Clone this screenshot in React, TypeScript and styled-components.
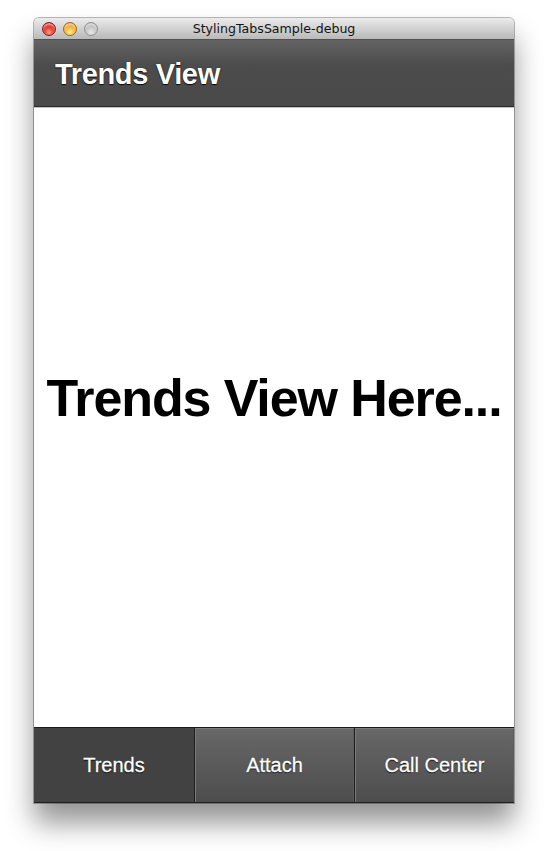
import React from "react";
import styled, { createGlobalStyle } from "styled-components";

const Global = createGlobalStyle`
  html, body { margin: 0; padding: 0; background: #ffffff; }
  #root { min-height: 851px; }
`;

const Page = styled.div`
  width: 547px;
  height: 851px;
  padding: 18px 0 0 34px;
  box-sizing: border-box;
  background: #ffffff;
`;

const Window = styled.div`
  width: 480px;
  height: 785px;
  display: flex;
  flex-direction: column;
  border-radius: 5px 5px 0 0;
  box-shadow: 0 20px 28px rgba(0, 0, 0, 0.42), 0 0 0 1px rgba(0, 0, 0, 0.28);
  background: #ffffff;
  overflow: hidden;
`;

const TitleBar = styled.div`
  position: relative;
  height: 21px;
  flex: none;
  display: flex;
  align-items: center;
  justify-content: center;
  background: linear-gradient(#ececec, #d2d2d2 50%, #b9b9b9);
  border-bottom: 1px solid #515151;
`;

const Lights = styled.div`
  position: absolute;
  left: 8px;
  top: 4px;
  display: flex;
  gap: 7px;
`;

const Light = styled.span<{ $kind: "red" | "yellow" | "gray" }>`
  width: 14px;
  height: 14px;
  border-radius: 50%;
  box-sizing: border-box;
  border: 1px solid
    ${(p) => (p.$kind === "red" ? "#8c1a1a" : p.$kind === "yellow" ? "#9b6a10" : "#8e8e8e")};
  background: ${(p) =>
    p.$kind === "red"
      ? "radial-gradient(circle at 50% 78%, #ff9a8c 0%, #ea3a30 45%, #a9100d 100%)"
      : p.$kind === "yellow"
      ? "radial-gradient(circle at 50% 78%, #ffef95 0%, #f7b63d 45%, #c7780d 100%)"
      : "radial-gradient(circle at 50% 78%, #e9e9e9 0%, #c4c4c4 50%, #9b9b9b 100%)"};
  box-shadow: inset 0 2px 2px rgba(255, 255, 255, 0.6);
`;

const WindowTitle = styled.span`
  font-family: "DejaVu Sans", "Liberation Sans", sans-serif;
  font-size: 12.6px;
  color: #141414;
  line-height: 1;
  margin-top: 2px;
`;

const Header = styled.header`
  height: 67px;
  flex: none;
  display: flex;
  align-items: center;
  padding: 3px 0 0 21px;
  box-sizing: border-box;
  background: linear-gradient(#646464 0%, #4c4c4c 38%, #494949 100%);
  border-bottom: 1px solid #2a2a2a;
  box-shadow: 0 1px 0 #c4c4c4;
  z-index: 1;
`;

const HeaderTitle = styled.h1`
  margin: 0;
  font-family: "Liberation Sans", Arial, sans-serif;
  font-weight: bold;
  font-size: 29px;
  letter-spacing: -0.35px;
  color: #ffffff;
  text-shadow: 0 1px 1px rgba(0, 0, 0, 0.85), 0 0 1px rgba(0, 0, 0, 0.8);
`;

const Content = styled.main`
  flex: 1;
  display: flex;
  align-items: center;
  justify-content: center;
  padding: 1px 0 40px;
  background: #ffffff;
`;

const BigText = styled.h2`
  margin: 0;
  font-family: "Liberation Sans", Arial, sans-serif;
  font-weight: bold;
  font-size: 52px;
  letter-spacing: -1.1px;
  color: #000000;
  white-space: nowrap;
`;

const TabBar = styled.nav`
  height: 74px;
  flex: none;
  display: grid;
  grid-template-columns: repeat(3, 1fr);
  border-top: 1px solid #1c1c1c;
  border-bottom: 1px solid #1f1f1f;
  background: #303030;
`;

const Tab = styled.div<{ $active?: boolean }>`
  display: flex;
  align-items: center;
  justify-content: center;
  box-sizing: border-box;
  font-family: "Liberation Sans", Arial, sans-serif;
  font-size: 20px;
  color: #ffffff;
  -webkit-text-stroke: 0.3px #ffffff;
  text-shadow: 0 1px 1px rgba(0, 0, 0, 0.85), 0 0 1px rgba(0, 0, 0, 0.7);
  background: ${(p) =>
    p.$active ? "#424242" : "linear-gradient(#686868, #5a5a5a 50%, #4d4d4d)"};
  border-left: 1px solid ${(p) => (p.$active ? "#424242" : "#1e1e1e")};
  box-shadow: ${(p) =>
    p.$active ? "none" : "inset 1px 1px 0 #7a7a7a, inset -1px 0 0 #5c5c5c"};
  &:first-child {
    border-left: none;
  }
`;

export default function App() {
  const tabs = ["Trends", "Attach", "Call Center"];
  return (
    <Page>
      <Global />
      <Window>
        <TitleBar>
          <Lights>
            <Light $kind="red" />
            <Light $kind="yellow" />
            <Light $kind="gray" />
          </Lights>
          <WindowTitle>StylingTabsSample-debug</WindowTitle>
        </TitleBar>
        <Header>
          <HeaderTitle>Trends View</HeaderTitle>
        </Header>
        <Content>
          <BigText>Trends View Here...</BigText>
        </Content>
        <TabBar>
          {tabs.map((t, i) => (
            <Tab key={t} $active={i === 0}>
              {t}
            </Tab>
          ))}
        </TabBar>
      </Window>
    </Page>
  );
}
